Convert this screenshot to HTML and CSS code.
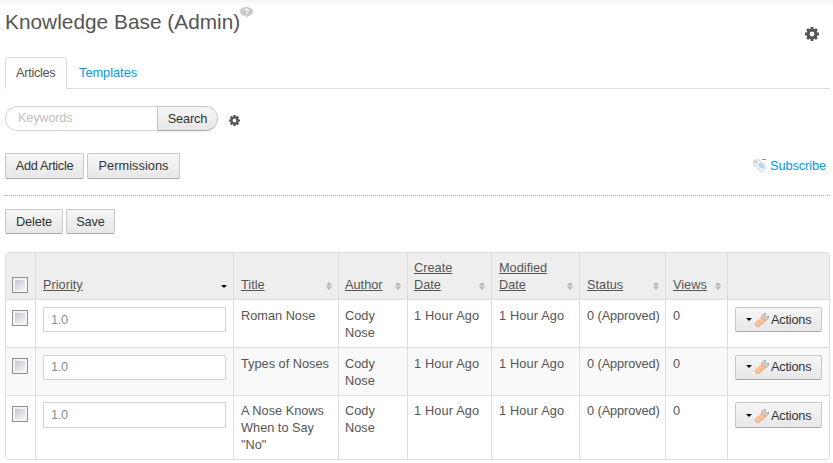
FILE: index.html
```html
<!DOCTYPE html>
<html lang="en">
<head>
<meta charset="utf-8">
<title>Knowledge Base (Admin)</title>
<link rel="stylesheet" href="styles.css">
</head>
<body>
<svg class="defs" aria-hidden="true">
  <symbol id="gear" viewBox="0 0 14 14"><circle cx="7" cy="7" r="3.9" fill="none" stroke="currentColor" stroke-width="3"/><path d="M7 0v2.5M7 11.5V14M0 7h2.5M11.5 7H14M2.1 2.1l1.8 1.8M10.1 10.1l1.8 1.8M2.1 11.9l1.8-1.8M10.1 3.9l1.8-1.8" fill="none" stroke="currentColor" stroke-width="2.8"/></symbol>
  <symbol id="sort" viewBox="0 0 6 8"><path d="M3 0L6 3.5H0zM0 4.5h6L3 8z" fill="#b5b5b5"/></symbol>
  <symbol id="wrench" viewBox="0 0 14 14"><path d="M6.500 7.500L9 5" stroke="#b5b5b5" stroke-width="3"/><path d="M7 6L6.500 3 8.800.6l2-.3-1 2.500 1.200 1.300L13.500 3l.1 2.200-2.200 2-3 .3z" fill="#cfcfcf" stroke="#a3a3a3" stroke-width=".8"/><path d="M2.900 11.200l4.200-3.600" stroke="#f4a573" stroke-width="5.600" stroke-linecap="round"/><path d="M2.900 11.100l4-3.500" stroke="#ffc59b" stroke-width="4" stroke-linecap="round"/><path d="M2.500 11.500l4.500-4" stroke="#f3b088" stroke-width=".8"/></symbol>
</svg>
<header class="head">
  <h1>Knowledge Base (Admin)</h1>
  <svg class="help" viewBox="0 0 13 11"><path d="M6.500 0C10 0 13 1.800 13 4.400S10.300 8.800 7.700 8.900L7 11 5.200 8.800C2.200 8.500 0 6.800 0 4.400 0 1.800 3 0 6.500 0z" fill="#cacaca"/><path d="M5 3.200c0-1.600 3.200-1.500 3.200.1C8.200 4.400 6.600 4.400 6.600 5.600M6.600 6.500v1.100" fill="none" stroke="#fff" stroke-width="1.200"/></svg>
  <svg class="gear gear-main"><use href="#gear"/></svg>
</header>
<nav class="tabs"><a class="tab active">Articles</a><a class="tab">Templates</a></nav>
<div class="search">
  <div class="field">Keywords</div><button class="btn search-btn">Search</button>
  <svg class="gear gear-small"><use href="#gear"/></svg>
</div>
<div class="toolbar">
  <button class="btn add">Add Article</button><button class="btn perm">Permissions</button>
  <a class="subscribe"><svg class="tag" viewBox="0 0 14 14"><path d="M.7 1.200L6 .8l7.300 7.700L8.500 13.300 1 6z" fill="#f2f2f2" stroke="#d0d0d0"/><path d="M5.500 4.700l3-.7 3.200 4L8.500 9.600 5 6.500z" fill="#a5d8fa"/><circle cx="3" cy="3" r="1" fill="#b5b5b5"/><path d="M9 .5h4" stroke="#79a66c"/></svg><span>Subscribe</span></a>
</div>
<div class="toolbar second"><button class="btn del">Delete</button><button class="btn save">Save</button></div>
<table>
  <colgroup><col class="c1"><col class="c2"><col class="c3"><col class="c4"><col class="c5"><col class="c6"><col class="c7"><col class="c8"><col class="c9"></colgroup>
  <thead><tr>
    <th><i class="check"></i></th>
    <th><div class="h"><span>Priority</span><i class="down"></i></div></th>
    <th><div class="h"><span>Title</span><svg class="sort"><use href="#sort"/></svg></div></th>
    <th><div class="h"><span>Author</span><svg class="sort"><use href="#sort"/></svg></div></th>
    <th><div class="h"><span>Create<br>Date</span><svg class="sort"><use href="#sort"/></svg></div></th>
    <th><div class="h"><span>Modified<br>Date</span><svg class="sort"><use href="#sort"/></svg></div></th>
    <th><div class="h"><span>Status</span><svg class="sort"><use href="#sort"/></svg></div></th>
    <th><div class="h"><span>Views</span><svg class="sort"><use href="#sort"/></svg></div></th>
    <th></th>
  </tr></thead>
  <tbody>
  <tr><td><i class="check"></i></td><td><div class="num">1.0</div></td><td>Roman Nose</td><td>Cody<br>Nose</td><td>1 Hour Ago</td><td>1 Hour Ago</td><td>0 (Approved)</td><td>0</td><td><button class="btn act"><i class="down"></i><svg class="wrench"><use href="#wrench"/></svg>Actions</button></td></tr>
  <tr class="alt"><td><i class="check"></i></td><td><div class="num">1.0</div></td><td>Types of Noses</td><td>Cody<br>Nose</td><td>1 Hour Ago</td><td>1 Hour Ago</td><td>0 (Approved)</td><td>0</td><td><button class="btn act"><i class="down"></i><svg class="wrench"><use href="#wrench"/></svg>Actions</button></td></tr>
  <tr class="last"><td><i class="check"></i></td><td><div class="num">1.0</div></td><td>A Nose Knows<br>When to Say<br>"No"</td><td>Cody<br>Nose</td><td>1 Hour Ago</td><td>1 Hour Ago</td><td>0 (Approved)</td><td>0</td><td><button class="btn act"><i class="down"></i><svg class="wrench"><use href="#wrench"/></svg>Actions</button></td></tr>
  </tbody>
</table>
</body>
</html>
```
FILE: styles.css
```css
* { box-sizing: border-box; }
body { margin: 0; padding: 0 3px 0 5px; height: 463px; overflow: hidden; background: linear-gradient(#f5f5f5, #fff 7px); font: 12.75px/17px "Liberation Sans", Arial, sans-serif; color: #555; }
svg { display: block; flex: none; }
.defs { position: absolute; width: 0; height: 0; }
.head { display: flex; align-items: flex-start; height: 57px; }
h1 { margin: 9px 0 0; font-size: 20.8px; line-height: 26px; font-weight: 400; letter-spacing: 0.03px; white-space: nowrap; }
.help { width: 13px; height: 11px; margin: 7px 0 0; }
.gear { color: #555; }
.gear-main { width: 14px; height: 14px; margin: 27px 11px 0 auto; }
.tabs { display: flex; height: 32px; border-bottom: 1px solid #ddd; }
.tab { height: 32px; padding: 7px 12px 0; color: #009ae5; }
.tab.active { width: 62px; padding: 6px 0 0 10px; border: 1px solid #ddd; border-bottom: 0; border-radius: 4px 4px 0 0; background: #fff; color: #555; letter-spacing: -.3px; }
.search { display: flex; height: 25px; margin-top: 17px; }
.field { width: 152px; border: 1px solid #d5d5d5; border-right: 0; border-radius: 13px 0 0 13px; padding: 2px 0 0 12px; color: #bfbfbf; background: #fff; letter-spacing: -.2px; }
.btn { font: inherit; letter-spacing: inherit; color: #333; padding: 0; text-align: center; white-space: nowrap; border: 1px solid #c8c8c8; border-bottom-color: #aaa; border-radius: 2px; background: linear-gradient(#f6f6f6, #e7e7e7); }
.search-btn { width: 61px; border-radius: 0 13px 13px 0; box-shadow: 0 1px 2px #0001; letter-spacing: -.15px; }
.gear-small { width: 11px; height: 11px; margin: 9px 0 0 11px; }
.toolbar { display: flex; gap: 3px; margin-top: 22px; height: 43px; border-bottom: 1px dotted #aaa; }
.toolbar .btn { height: 26px; padding-bottom: 1px; }
.toolbar .add { width: 79px; letter-spacing: -.32px; }
.toolbar .perm { width: 93px; letter-spacing: .06px; }
.subscribe { display: flex; gap: 3px; margin: 6px 4px 0 auto; color: #009ae5; letter-spacing: -.08px; }
.subscribe span { margin-top: -2px; }
.tag { width: 14px; height: 14px; }
.second { height: 25px; margin-top: 13px; border: 0; }
.second .btn { height: 25px; padding-bottom: 0; letter-spacing: -.15px; }
.del { width: 58px; }
.save { width: 49px; }
table { width: 825px; margin-top: 18px; table-layout: fixed; border: 1px solid #ddd; border-spacing: 0; border-radius: 4px; overflow: hidden; }
.c1 { width: 29px; } .c2 { width: 198px; } .c3 { width: 105px; } .c4 { width: 69px; } .c5 { width: 84px; } .c6 { width: 88px; } .c7 { width: 86px; } .c8 { width: 62px; } .c9 { width: 102px; }
th, td { padding: 7px 0 0 7px; border-left: 1px solid #ddd; text-align: left; vertical-align: top; font-weight: 400; white-space: nowrap; }
th:first-child, td:first-child { border-left: 0; padding-left: 6px; }
th:nth-child(4), td:nth-child(4), th:nth-child(5), td:nth-child(5) { padding-left: 6px; }
th { height: 46px; padding-top: 0; padding-bottom: 6px; vertical-align: bottom; background: #eee; }
td { height: 48px; border-top: 1px solid #ddd; }
td:nth-child(5), td:nth-child(6) { letter-spacing: .15px; }
td:nth-child(7) { letter-spacing: -.08px; }
.alt td { background: #f9f9f9; }
.last td { height: 64px; padding-top: 6px; }
.h { display: flex; align-items: flex-end; justify-content: space-between; padding-right: 6px; text-decoration: underline; }
.h .down { margin: 0 0 5px 0; }
.sort { width: 6px; height: 8px; margin-bottom: 3px; }
.check { display: block; width: 16px; height: 16px; border: 1px solid #8e8f8f; background: linear-gradient(135deg, #c3c7cf, #f6f6f6) content-box, #f4f4f4; padding: 2px; }
td .check { margin-top: 3px; }
.last .check { margin-top: 4px; }
.num { width: 183px; height: 25px; padding: 3px 0 0 7px; border: 1px solid #d5d5d5; background: #fff; color: #8c8c8c; letter-spacing: -.3px; }
.act { display: flex; align-items: center; width: 87px; height: 25px; padding-left: 10px; letter-spacing: -.2px; }
.alt .num { padding-top: 2px; }
.alt .act { padding-bottom: 2px; }
.last .num, .last .act { height: 26px; }
.down { display: block; width: 0; border: 3px solid transparent; border-top-color: #000; border-bottom: 0; }
.wrench { width: 14px; height: 14px; margin: 1px 2px 0 3px; }
```
